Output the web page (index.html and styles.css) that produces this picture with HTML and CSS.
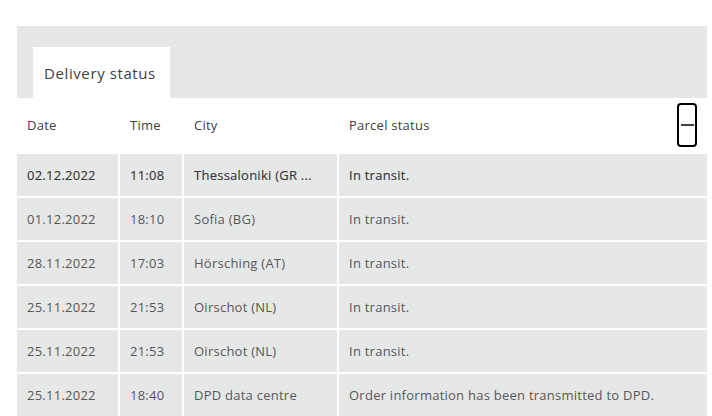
FILE: index.html
```html
<!DOCTYPE html>
<html lang="en">
<head>
<meta charset="utf-8">
<title>Delivery status</title>
<link rel="stylesheet" href="styles.css">
</head>
<body>
<section class="panel">
  <div class="tabs">
    <div class="tab">Delivery status</div>
  </div>
  <div class="table">
    <div class="row head">
      <div class="cell">Date</div>
      <div class="cell">Time</div>
      <div class="cell">City</div>
      <div class="cell status">Parcel status
        <button class="toggle" aria-label="Collapse"><span class="bar"></span></button>
      </div>
    </div>
    <div class="row first">
      <div class="cell">02.12.2022</div>
      <div class="cell">11:08</div>
      <div class="cell">Thessaloniki (GR ...</div>
      <div class="cell">In transit.</div>
    </div>
    <div class="row">
      <div class="cell">01.12.2022</div>
      <div class="cell">18:10</div>
      <div class="cell">Sofia (BG)</div>
      <div class="cell">In transit.</div>
    </div>
    <div class="row">
      <div class="cell">28.11.2022</div>
      <div class="cell">17:03</div>
      <div class="cell">Hörsching (AT)</div>
      <div class="cell">In transit.</div>
    </div>
    <div class="row">
      <div class="cell">25.11.2022</div>
      <div class="cell">21:53</div>
      <div class="cell">Oirschot (NL)</div>
      <div class="cell">In transit.</div>
    </div>
    <div class="row">
      <div class="cell">25.11.2022</div>
      <div class="cell">21:53</div>
      <div class="cell">Oirschot (NL)</div>
      <div class="cell">In transit.</div>
    </div>
    <div class="row">
      <div class="cell">25.11.2022</div>
      <div class="cell">18:40</div>
      <div class="cell">DPD data centre</div>
      <div class="cell">Order information has been transmitted to DPD.</div>
    </div>
  </div>
</section>
</body>
</html>
```

FILE: styles.css
```css
html, body {
  margin: 0;
  padding: 0;
  background: #ffffff;
}
body {
  font-family: "Open Sans", "Liberation Sans", sans-serif;
  color: #414042;
  padding: 26px 5px 0 17px;
  overflow: hidden;
  height: 416px;
  box-sizing: border-box;
}
.panel {
  width: 690px;
  background: #e6e7e7;
  padding-top: 21px;
}
.tabs {
  display: flex;
  padding-left: 16px;
}
.tab {
  width: 137px;
  height: 51px;
  box-sizing: border-box;
  background: #ffffff;
  padding-left: 11px;
  display: flex;
  align-items: center;
  font-size: 15px;
  letter-spacing: 0.6px;
  color: #414042;
}
.table {
  display: flex;
  flex-direction: column;
  gap: 2px;
  background: #ffffff;
}
.row {
  display: grid;
  grid-template-columns: 101px 62px 153px 1fr;
  column-gap: 2px;
  height: 42px;
}
.cell {
  background: #e6e7e7;
  display: flex;
  align-items: center;
  padding-left: 10px;
  font-size: 13px;
  letter-spacing: 0.25px;
  color: #58585a;
  white-space: nowrap;
  overflow: hidden;
}
.row.head {
  height: 54px;
}
.row.head .cell {
  background: #ffffff;
  color: #414042;
}
.row.first .cell {
  color: #38383a;
  -webkit-text-stroke: 0.15px #38383a;
}
.status {
  position: relative;
}
.toggle {
  position: absolute;
  right: 10px;
  top: 5px;
  width: 20px;
  height: 44px;
  box-sizing: border-box;
  border: 2px solid #000000;
  border-radius: 4px;
  background: #ffffff;
  padding: 0;
  display: flex;
  align-items: center;
  justify-content: center;
}
.bar {
  display: block;
  width: 13px;
  height: 2px;
  background: #414042;
}
```
